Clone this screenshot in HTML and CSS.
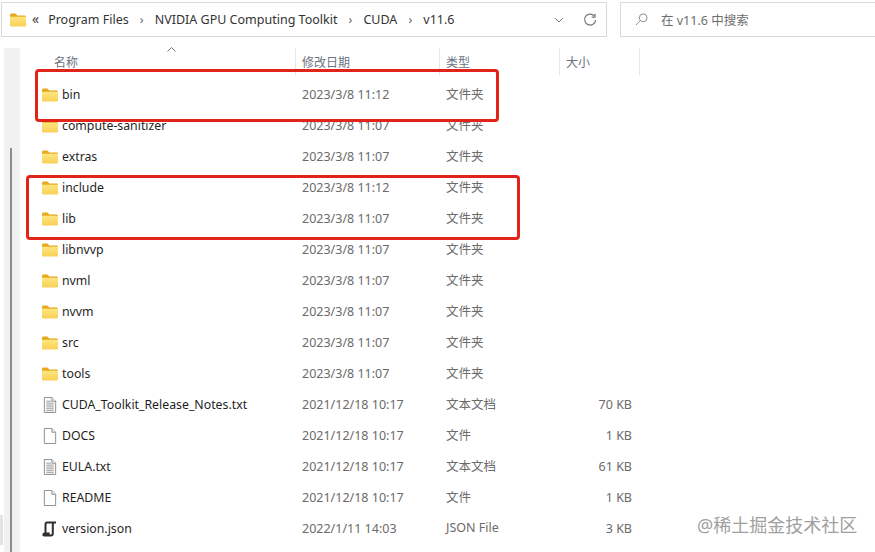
FILE: index.html
```html
<!DOCTYPE html>
<html lang="zh">
<head>
<meta charset="utf-8">
<title>v11.6</title>
<link rel="stylesheet" href="styles.css">
</head>
<body>
<svg class="defs" width="0" height="0" aria-hidden="true">
  <defs>
    <linearGradient id="fold" x1="0" y1="0" x2="0" y2="1"><stop offset="0" stop-color="#ffe680"/><stop offset="1" stop-color="#f8cf55"/></linearGradient>
    <symbol id="folder" viewBox="0 0 16 14">
      <path d="M0 2.2C0 1.2.6.6 1.5.6h4l1.8 1.8h7.2c.9 0 1.500.6 1.500 1.500v1H0z" fill="#e8a91f"/>
      <path d="M0 3.800h16v8.400c0 .8-.6 1.400-1.400 1.400H1.400C.6 13.600 0 13 0 12.200z" fill="url(#fold)"/>
    </symbol>
    <symbol id="doc" viewBox="0 0 13 17">
      <path d="M.5.5h8l4 4v12H.5z" fill="#fff" stroke="#8a8a8a"/>
      <path d="M8.500.5v4h4" fill="#eee" stroke="#8a8a8a"/>
    </symbol>
    <symbol id="txt" viewBox="0 0 13 17">
      <path d="M.5.5h8l4 4v12H.5z" fill="#fbfbfb" stroke="#8a8a8a"/>
      <path d="M8.500.5v4h4" fill="#eee" stroke="#8a8a8a"/>
      <path d="M2.500 4.500h5M2.500 6.500h8M2.500 8.500h8M2.500 10.500h8M2.500 12.500h8M2.500 14.500h8" stroke="#9a9a9a"/>
    </symbol>
    <symbol id="json" viewBox="0 0 14 16">
      <path d="M4 1.500h9M4 1.500c-1 0-1.500.6-1.500 2v8.500M11 1.500c-1 .2-1.200 1-1.200 2v9c0 1.300-.8 2-2 2H1.200c-.7 0-1-.4-.7-1.300.2-.5.6-.7 1.200-.7h5" fill="none" stroke="#2f2f2f" stroke-width="2"/>
    </symbol>
  </defs>
</svg>

<header class="toolbar">
  <div class="address">
    <svg class="addr-folder"><use href="#folder"/></svg>
    <span class="chev-double">«</span>
    <span class="crumb">Program Files</span><span class="sep">›</span>
    <span class="crumb">NVIDIA GPU Computing Toolkit</span><span class="sep">›</span>
    <span class="crumb">CUDA</span><span class="sep">›</span>
    <span class="crumb">v11.6</span>
    <span class="spacer"></span>
    <svg class="addr-down" viewBox="0 0 10 6"><path d="M1 1l4 4 4-4" fill="none" stroke="#777" stroke-width="1"/></svg>
    <svg class="addr-refresh" viewBox="0 0 14 14"><path d="M11.500 3.200A5.500 5.500 0 1 0 12.600 7" fill="none" stroke="#777" stroke-width="1.200"/><path d="M12 .8v3.300H8.700" fill="none" stroke="#777" stroke-width="1.200"/></svg>
  </div>
  <div class="search">
    <svg class="search-icon" viewBox="0 0 14 14"><circle cx="8.800" cy="5.200" r="4.200" fill="none" stroke="#888"/><path d="M5.800 8.200L1 13" stroke="#888"/></svg>
    <span>在 v11.6 中搜索</span>
  </div>
</header>

<main class="body">
  <div class="rail"><div class="thumb"></div></div>
  <section class="list">
    <div class="row head">
      <span class="c-name">名称<svg class="sort" viewBox="0 0 9 5"><path d="M.5 4.500L4.500.5l4 4" fill="none" stroke="#777"/></svg></span>
      <span class="c-date">修改日期</span>
      <span class="c-type">类型</span>
      <span class="c-size">大小</span>
    </div>
    <div class="row"><span class="c-name"><svg class="ico"><use href="#folder"/></svg>bin</span><span class="c-date">2023/3/8 11:12</span><span class="c-type">文件夹</span><span class="c-size"></span></div>
    <div class="row"><span class="c-name"><svg class="ico"><use href="#folder"/></svg>compute-sanitizer</span><span class="c-date">2023/3/8 11:07</span><span class="c-type">文件夹</span><span class="c-size"></span></div>
    <div class="row"><span class="c-name"><svg class="ico"><use href="#folder"/></svg>extras</span><span class="c-date">2023/3/8 11:07</span><span class="c-type">文件夹</span><span class="c-size"></span></div>
    <div class="row"><span class="c-name"><svg class="ico"><use href="#folder"/></svg>include</span><span class="c-date">2023/3/8 11:12</span><span class="c-type">文件夹</span><span class="c-size"></span></div>
    <div class="row"><span class="c-name"><svg class="ico"><use href="#folder"/></svg>lib</span><span class="c-date">2023/3/8 11:07</span><span class="c-type">文件夹</span><span class="c-size"></span></div>
    <div class="row"><span class="c-name"><svg class="ico"><use href="#folder"/></svg>libnvvp</span><span class="c-date">2023/3/8 11:07</span><span class="c-type">文件夹</span><span class="c-size"></span></div>
    <div class="row"><span class="c-name"><svg class="ico"><use href="#folder"/></svg>nvml</span><span class="c-date">2023/3/8 11:07</span><span class="c-type">文件夹</span><span class="c-size"></span></div>
    <div class="row"><span class="c-name"><svg class="ico"><use href="#folder"/></svg>nvvm</span><span class="c-date">2023/3/8 11:07</span><span class="c-type">文件夹</span><span class="c-size"></span></div>
    <div class="row"><span class="c-name"><svg class="ico"><use href="#folder"/></svg>src</span><span class="c-date">2023/3/8 11:07</span><span class="c-type">文件夹</span><span class="c-size"></span></div>
    <div class="row"><span class="c-name"><svg class="ico"><use href="#folder"/></svg>tools</span><span class="c-date">2023/3/8 11:07</span><span class="c-type">文件夹</span><span class="c-size"></span></div>
    <div class="row"><span class="c-name"><svg class="ico"><use href="#txt"/></svg>CUDA_Toolkit_Release_Notes.txt</span><span class="c-date">2021/12/18 10:17</span><span class="c-type">文本文档</span><span class="c-size">70 KB</span></div>
    <div class="row"><span class="c-name"><svg class="ico"><use href="#doc"/></svg>DOCS</span><span class="c-date">2021/12/18 10:17</span><span class="c-type">文件</span><span class="c-size">1 KB</span></div>
    <div class="row"><span class="c-name"><svg class="ico"><use href="#txt"/></svg>EULA.txt</span><span class="c-date">2021/12/18 10:17</span><span class="c-type">文本文档</span><span class="c-size">61 KB</span></div>
    <div class="row"><span class="c-name"><svg class="ico"><use href="#doc"/></svg>README</span><span class="c-date">2021/12/18 10:17</span><span class="c-type">文件</span><span class="c-size">1 KB</span></div>
    <div class="row"><span class="c-name"><svg class="ico"><use href="#json"/></svg>version.json</span><span class="c-date">2022/1/11 14:03</span><span class="c-type">JSON File</span><span class="c-size">3 KB</span></div>
  </section>
</main>

<div class="mark mark-one"></div>
<div class="mark mark-two"></div>
<div class="edge"></div>
<div class="watermark">@稀土掘金技术社区</div>
</body>
</html>
```
FILE: styles.css
```css
* { box-sizing: border-box; }
html, body { margin: 0; height: 100%; }
body {
  position: relative;
  width: 875px;
  height: 552px;
  overflow: hidden;
  background: #fff;
  font-family: "Noto Sans", "Noto Sans CJK SC", sans-serif;
  font-size: 12.5px;
  color: #1f1f1f;
}
.defs { position: absolute; }

.toolbar {
  display: flex;
  gap: 13px;
  padding: 2px 0 0 1px;
  height: 48px;
}
.address, .search {
  display: flex;
  align-items: center;
  height: 35px;
  border: 1px solid #d9d9d9;
  background: #fff;
}
.address { width: 606px; padding-left: 8px; }
.search { flex: 1; border-right: 0; padding-left: 14px; color: #6e6e6e; gap: 13px; }
.addr-folder { width: 16px; height: 14px; flex: none; }
.chev-double { margin: -3px 9px 0 6px; font-size: 14px; color: #444; }
.crumb { color: #333; white-space: nowrap; }
.sep { width: 26px; text-align: center; color: #666; white-space: nowrap; }
.spacer { flex: 1; }
.addr-down { width: 10px; height: 6px; margin-right: 19px; }
.addr-refresh { width: 14px; height: 14px; margin-right: 9px; }
.search-icon { width: 13px; height: 13px; flex: none; }

.body { display: flex; height: 504px; }
.rail {
  width: 16px;
  margin-left: 4px;
  background: #f1f1f1;
  display: flex;
  justify-content: center;
}
.thumb {
  width: 2px;
  height: 404px;
  margin-top: 100px;
  margin-right: 2px;
  background: #8c8c8c;
}
.list { flex: 1; }

.row {
  display: grid;
  grid-template-columns: 254px 144px 120px 72px;
  align-items: center;
  height: 31px;
  padding-left: 22px;
  color: #6b6b6b;
  white-space: nowrap;
}
.row.head {
  grid-template-columns: 276px 144px 120px 80px;
  height: 31px;
  align-items: start;
  color: #6b7280;
  font-size: 12px;
  padding-left: 0;
}
.head span {
  display: flex;
  align-items: center;
  padding: 0 0 0 6px;
  border-right: 1px solid #e6e6e6;
  height: 27px;
  position: relative;
}
.head .c-name { padding-left: 34px; }
.sort { position: absolute; left: 147px; top: -1px; width: 9px; height: 5px; }

.c-name { display: flex; align-items: center; color: #1f1f1f; font-size: 12.3px; }
.head .c-name { color: #6b7280; font-size: 12px; }
.c-date { padding-left: 6px; }
.c-type { padding: 0 0 2px 6px; }
.c-size { text-align: right; }
.ico { width: 16px; height: 16px; margin-right: 4px; flex: none; }

.mark {
  position: absolute;
  border: 3px solid #e2231a;
  border-radius: 4px;
}
.mark-one { left: 35px; top: 69px; width: 464px; height: 53px; }
.mark-two { left: 26px; top: 175px; width: 494px; height: 65px; }
.edge { position: absolute; left: 0; top: 515px; width: 3px; height: 30px; background: #e4e4e4; }
.watermark {
  position: absolute;
  left: 697px;
  top: 512px;
  font-size: 18px;
  line-height: 26px;
  color: #a0a0a0;
  white-space: nowrap;
}
```
